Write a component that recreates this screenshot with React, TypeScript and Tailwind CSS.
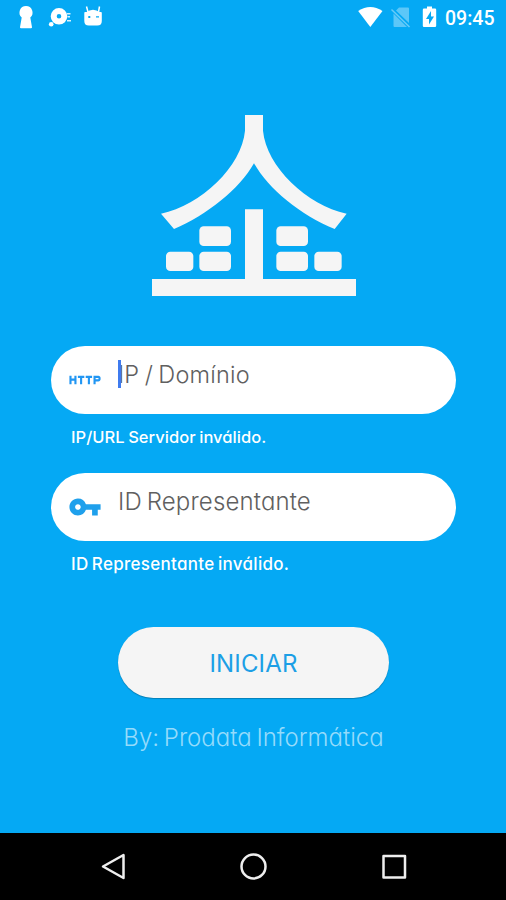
import { useState } from "react";
import type { ReactNode } from "react";
import { MdHttp, MdVpnKey } from "react-icons/md";

const StatusBar = () => (
  <div className="h-9 shrink-0 flex items-start justify-between">
    <svg width="110" height="36" viewBox="0 0 110 36" fill="#fff">
      {/* keyhole */}
      <path d="M26 6a6.500 6.500 0 0 0-4.300 11.400L20 27.300q0 1 1 1h10q1 0 1-1L30.300 17.400A6.500 6.500 0 0 0 26 6z" />
      {/* disc */}
      <path
        fillRule="evenodd"
        d="M59 8a8.300 8.300 0 1 0 0 16.600a8.300 8.300 0 1 0 0-16.600zM59 14a2.300 2.300 0 1 1 0 4.600a2.300 2.300 0 1 1 0-4.600z"
      />
      <circle cx="51.200" cy="24.300" r="2.300" />
      <path d="M67 13h3.500v1.500H67zM67.500 16h2.500v1.500h-2.500zM67 20h4v1.500h-4z" opacity=".85" />
      {/* robot */}
      <path
        fillRule="evenodd"
        d="M85 12h16q.8 0 .8 1v8q0 4.500-4.500 4.500h-8.500Q84.300 25.500 84.300 21v-8q0-1 .7-1zM88.300 16v2h2v-2zM96 16.300v1.200h3v-1.200z"
      />
      <path d="M88 12l-1.500-5.500M98.500 12l1-5.500" stroke="#fff" strokeWidth="1.500" />
      <path d="M86 12.200q7-5 14 0z" />
    </svg>
    <div className="flex">
      <svg width="96" height="36" viewBox="0 0 96 36" fill="#fff">
        <path d="M12.200 11Q24.300 3.200 36.500 11L24.300 27z" />
        <path d="M53 7.500H62q1 0 1 1V23L50 10.500zM47.500 13.500L61 27H48.500q-1 0-1-1z" opacity=".35" />
        <path d="M45.500 9.500l18 17.500" stroke="#fff" strokeWidth="1.500" opacity=".4" />
        <path
          fillRule="evenodd"
          d="M81 6.500h5v2h3q1.200 0 1.200 1.200v16.100q0 1.200-1.200 1.200H78q-1.200 0-1.200-1.200V9.700q0-1.200 1.200-1.200h3zM85 11l-5 8h3v5.500l5-8h-3z"
        />
      </svg>
      <span className="w-[64px] pt-[7px] pl-[3px] font-[Roboto,sans-serif] font-medium text-[19.500px] leading-[23px] text-white whitespace-nowrap">
        09:45
      </span>
    </div>
  </div>
);

const Logo = () => (
  <svg className="ml-[152px] mt-[79px] shrink-0" width="204" height="181" viewBox="35 45 612 543" fill="#f5f5f5">
    <path d="M314 45H368V92C378 200 500 315 619 341L583 387C480 345 385 268 341 190C297 268 200 345 101 387L62 341C182 315 304 200 314 92Z" />
    <path d="M314 328H368V537H647V588H35V537H314Z" />
    <rect x="177" y="379" width="95" height="59" rx="13" />
    <rect x="408" y="379" width="95" height="59" rx="13" />
    <rect x="77" y="455" width="82" height="58" rx="13" />
    <rect x="177" y="455" width="95" height="58" rx="13" />
    <rect x="408" y="455" width="95" height="58" rx="13" />
    <rect x="522" y="455" width="82" height="58" rx="13" />
  </svg>
);

type FieldProps = {
  icon: ReactNode;
  name: string;
  placeholder: string;
  error: string;
  inputClass: string;
  errorClass: string;
  showCaret?: boolean;
};

const Field = ({ icon, name, placeholder, error, inputClass, errorClass, showCaret }: FieldProps) => {
  const [value, setValue] = useState("");

  return (
    <div className="flex flex-col">
      <label className="relative h-[68px] rounded-full bg-white flex items-start pl-[17px]">
        <span className="w-[50px] h-full flex items-center shrink-0">{icon}</span>
        <input
          name={name}
          value={value}
          placeholder={placeholder}
          onChange={(e) => setValue(e.target.value)}
          className={`mt-[13px] h-8 w-[300px] outline-none text-[#555] placeholder:text-[#606060] placeholder:opacity-100 font-light ${inputClass}`}
        />
        {showCaret && <span className="absolute left-[67px] top-[14px] w-[3px] h-7 bg-[#3f7bef]" />}
      </label>
      <span className={`mt-[11px] ml-5 h-6 leading-6 font-medium text-white whitespace-nowrap ${errorClass}`}>
        {error}
      </span>
    </div>
  );
};

const NavBar = () => (
  <div className="h-[67px] shrink-0 bg-black">
    <svg width="506" height="67" viewBox="0 0 506 67" fill="none" stroke="#eee" strokeWidth="2.500" strokeLinejoin="round">
      <path d="M123.500 22V45L103 33.500Z" />
      <circle cx="253.500" cy="33.500" r="12" />
      <rect x="383.500" y="23" width="21.500" height="21.500" />
    </svg>
  </div>
);

export default function App() {
  return (
    <div className="w-[506px] h-[900px] flex flex-col overflow-hidden bg-[#05a9f4] font-[Inter,'Open_Sans',sans-serif] [font-feature-settings:'cv11','ss03']">
      <StatusBar />
      <Logo />

      <form className="flex-1 flex flex-col pt-[50px] pl-[51px] pr-[50px]" onSubmit={(e) => e.preventDefault()}>
        <div className="flex flex-col gap-6">
          <Field
            icon={<MdHttp size={34} color="#2196f3" />}
            name="server"
            placeholder="IP / Domínio"
            error="IP/URL Servidor inválido."
            inputClass="text-[23.500px] tracking-[0.200px] [word-spacing:-1.500px]"
            errorClass="text-[16.500px] tracking-[0.050px] [word-spacing:-1px]"
            showCaret
          />
          <Field
            icon={<MdVpnKey size={34} color="#1fa0ec" />}
            name="representante"
            placeholder="ID Representante"
            error="ID Representante inválido."
            inputClass="text-[24px] tracking-[0.150px] [word-spacing:-2px]"
            errorClass="text-[17px] tracking-[0.300px] [word-spacing:-1.500px]"
          />
        </div>

        <button
          type="submit"
          className="mt-[51px] ml-[67px] w-[271px] h-[71px] rounded-full bg-[#f5f5f5] pt-0.5 text-[#1c9fe6] text-[24px] tracking-[0.150px] shadow-[0_1px_1px_rgba(0,0,0,0.25)]"
        >
          INICIAR
        </button>
        <span className="mt-6 h-8 text-center leading-8 text-[24px] font-light [word-spacing:-2px] text-[#95dbfb] whitespace-nowrap">
          By: Prodata Informática
        </span>
      </form>

      <NavBar />
    </div>
  );
}
